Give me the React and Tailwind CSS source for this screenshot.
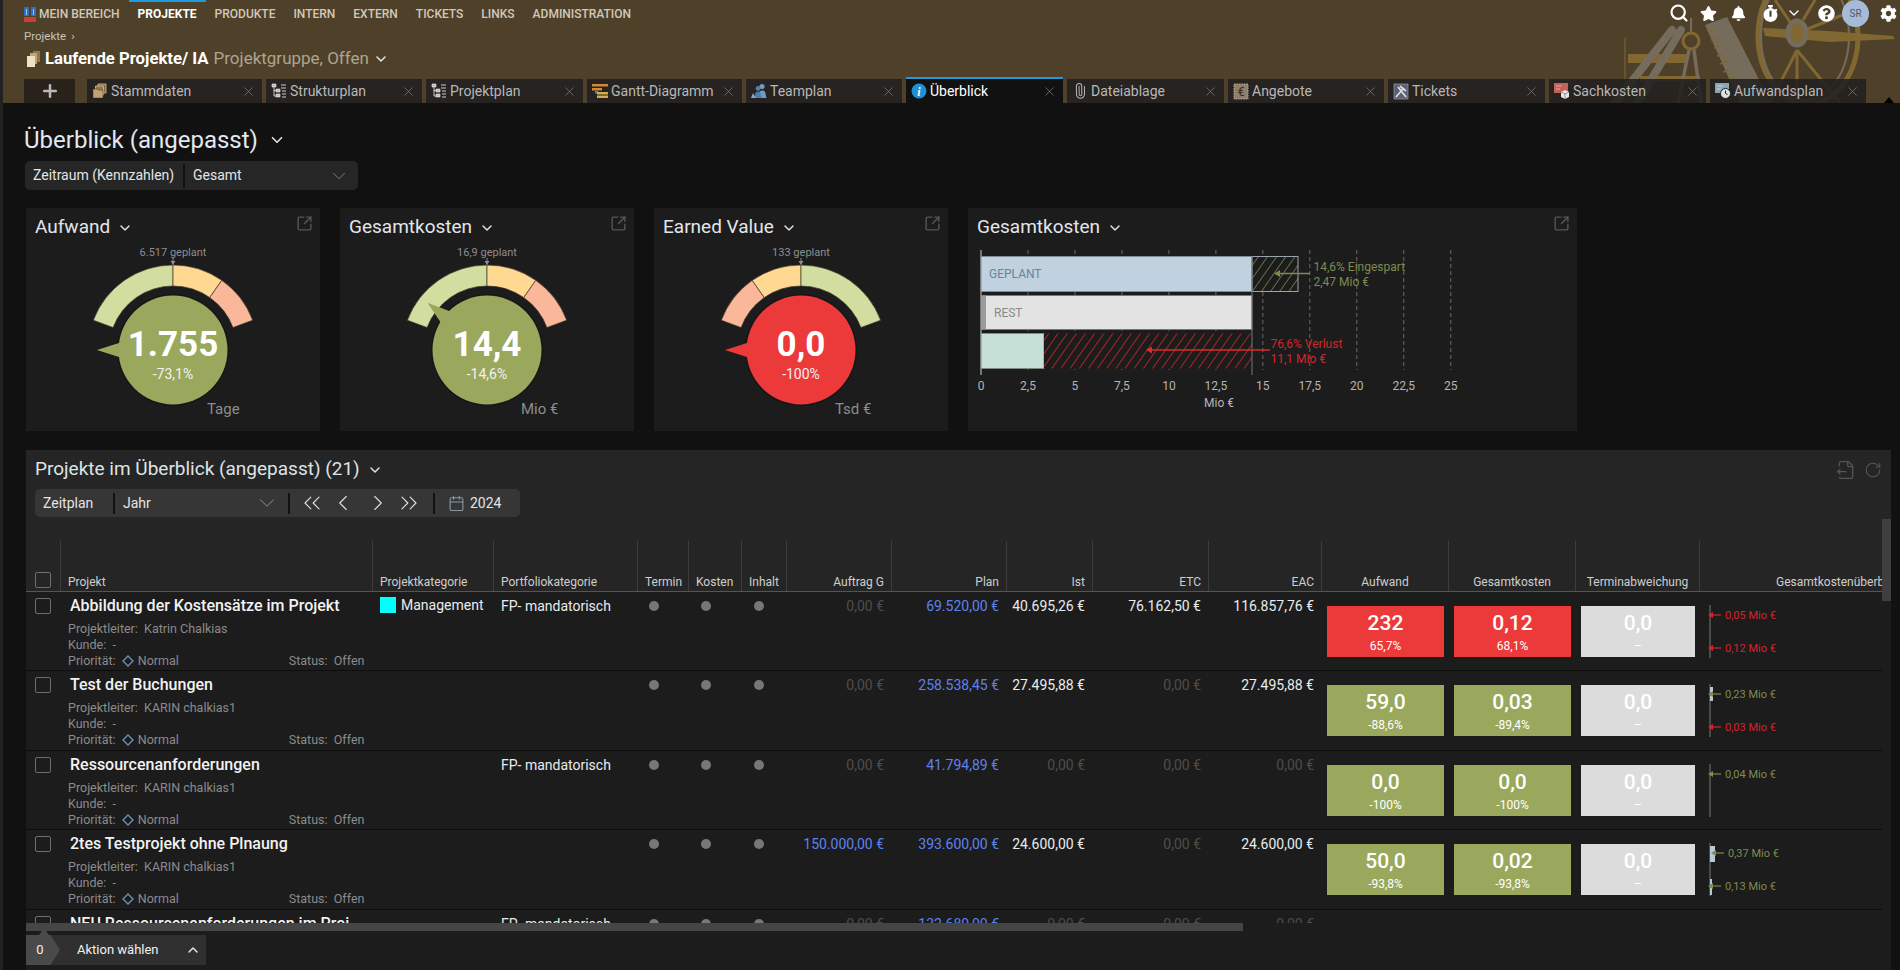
import React from 'react';
import { ChevronDown, ChevronUp, ChevronLeft, ChevronRight, ChevronsLeft, ChevronsRight, SquareArrowOutUpRight, X, Plus, Search, Calendar, Paperclip, RotateCw, FileOutput } from 'lucide-react';
import { FaStar, FaBell, FaStopwatch, FaQuestionCircle, FaCog } from 'react-icons/fa';

const polar = (cx, cy, r, a) => {
  const t = (a * Math.PI) / 180;
  return [cx + r * Math.sin(t), cy - r * Math.cos(t)];
};
const arcSeg = (cx, cy, a1, a2, r1 = 64, r2 = 85) => {
  const [x1, y1] = polar(cx, cy, r2, a1);
  const [x2, y2] = polar(cx, cy, r2, a2);
  const [x3, y3] = polar(cx, cy, r1, a2);
  const [x4, y4] = polar(cx, cy, r1, a1);
  return `M${x1} ${y1}A${r2} ${r2} 0 0 1 ${x2} ${y2}L${x3} ${y3}A${r1} ${r1} 0 0 0 ${x4} ${y4}Z`;
};

function TabIcon({ kind }) {
  if (kind === 'stamm') return (
    <svg width="16" height="16" viewBox="0 0 16 16"><path d="M6 1h8v9H6z" fill="#7d6a48" stroke="#d9c08c" strokeWidth=".8" /><path d="M3.5 3h8v9h-8z" fill="#8f7850" stroke="#d9c08c" strokeWidth=".8" /><path d="M1 6h4l1 1h5v8H1z" fill="#c2a56e" stroke="#3a2f1c" strokeWidth=".5" /></svg>
  );
  if (kind === 'tree') return (
    <svg width="16" height="16" viewBox="0 0 16 16" fill="none"><path d="M1 1h4v3H1zM5 6h4v3H5zM5 11h4v3H5z" fill="#bbb" stroke="#eee" strokeWidth=".6" /><path d="M3 4v9h2M3 7.5h2M10 2h5M10 5h5M11 8h4M11 11h4M11 14h4" stroke="#d0d0d0" strokeWidth="1" /></svg>
  );
  if (kind === 'gantt') return (
    <svg width="16" height="16" viewBox="0 0 16 16"><rect x="0" y="1" width="16" height="2.5" fill="#d08a35" /><rect x="0" y="5" width="10" height="2.5" fill="#d08a35" /><rect x="3" y="8" width="3" height="2.5" fill="#3a8fc0" /><rect x="5" y="9" width="11" height="2.5" fill="#d8b040" /><rect x="5" y="12.5" width="11" height="2.5" fill="#c8b060" /></svg>
  );
  if (kind === 'team') return (
    <svg width="16" height="16" viewBox="0 0 16 16" fill="#6d9cc4"><circle cx="11" cy="3.5" r="2.6" /><path d="M7.5 15l1-6c.4-2 5-2 5.600 0l1.400 6z" /><circle cx="7" cy="5.500" r="2.400" fill="#4f7fa8" /><path d="M3.500 15l1-5c.4-1.600 4.600-1.600 5 0l1 5z" fill="#4f7fa8" /><path d="M0 15l2-5 3 5z" fill="#7fa9cc" /></svg>
  );
  if (kind === 'info') return (
    <svg width="16" height="16" viewBox="0 0 16 16"><circle cx="8" cy="8" r="7.500" fill="#1f8fd8" /><text x="8" y="12.500" textAnchor="middle" fontSize="12" fontWeight="700" fontStyle="italic" fontFamily="Liberation Serif, serif" fill="#fff">i</text></svg>
  );
  if (kind === 'clip') return <Paperclip size={16} strokeWidth={1.5} color="#b8b8b8" className="-rotate-45" />;
  if (kind === 'euro') return (
    <svg width="16" height="17" viewBox="0 0 16 17"><rect x="1" y="1" width="14" height="15" fill="#8d7f6b" stroke="#b9a98e" strokeDasharray="1.500 1" /><text x="8" y="13" textAnchor="middle" fontSize="12" fill="#3b2e1c" fontFamily="Roboto, sans-serif">€</text></svg>
  );
  if (kind === 'ticket') return (
    <svg width="16" height="17" viewBox="0 0 16 17"><rect x="1" y="1" width="14" height="15" fill="#5a5f78" stroke="#aaa" strokeWidth=".6" /><path d="M3 14L10 6M7 3l6 5M5 4l8 10" stroke="#ddd" strokeWidth="1.800" /></svg>
  );
  if (kind === 'sach') return (
    <svg width="16" height="16" viewBox="0 0 16 16"><rect x="0" y="0" width="14" height="10" fill="#c2605a" /><path d="M2 3h6M2 6h4" stroke="#e6a8a0" /><path d="M7 9l4-2 4 2v5l-4 2-4-2z" fill="#e8e8e8" /><path d="M7 9l4 2 4-2M11 11v5" stroke="#555" strokeWidth=".6" fill="none" /></svg>
  );
  return (
    <svg width="16" height="16" viewBox="0 0 16 16"><rect x="0" y="0" width="14" height="10" fill="#88a6b8" /><path d="M2 3h6M2 6h4" stroke="#c4d6e0" /><circle cx="10.500" cy="10.500" r="5" fill="#e0e0e0" stroke="#222" /><path d="M10.500 7.500v3l2 1" stroke="#222" fill="none" /></svg>
  );
}

const tabs = [
  { w: 'w-[175px]', icon: 'stamm', label: 'Stammdaten' },
  { w: 'w-[156px]', icon: 'tree', label: 'Strukturplan' },
  { w: 'w-[157px]', icon: 'tree', label: 'Projektplan' },
  { w: 'w-[155px]', icon: 'gantt', label: 'Gantt-Diagramm' },
  { w: 'w-[156px]', icon: 'team', label: 'Teamplan' },
  { w: 'w-[157px]', icon: 'info', label: 'Überblick', active: true },
  { w: 'w-[157px]', icon: 'clip', label: 'Dateiablage' },
  { w: 'w-[156px]', icon: 'euro', label: 'Angebote' },
  { w: 'w-[157px]', icon: 'ticket', label: 'Tickets' },
  { w: 'w-[157px]', icon: 'sach', label: 'Sachkosten' },
  { w: 'w-[156px]', icon: 'auf', label: 'Aufwandsplan' },
];

function Illustration() {
  return (
    <svg className="absolute left-[-3px] top-0 opacity-85" width="1900" height="103" viewBox="0 0 1900 103" aria-hidden="true">
      <g fill="none">
        <path d="M1628 54h60v9h-60zM1640 76h60v5h-60z" fill="#8a6f34" />
        <path d="M1625 38v45" stroke="#8a6f34" />
        <path d="M1672 30L1615 103M1681 30L1637 103" stroke="#7d7464" strokeWidth="8" strokeLinecap="round" />
        <path d="M1705 25l22-8 44 86h-31z" fill="#7d7464" />
        <path d="M1708 32l8-3M1711 40l6-2M1714 48l8-3M1717 56l6-2M1720 64l8-3M1723 72l6-2M1727 80l8-3M1730 88l6-2M1734 96l8-3" stroke="#8a6f34" strokeWidth="1.500" />
        <circle cx="1691" cy="41" r="8" stroke="#8a6f34" strokeWidth="3" />
        <path d="M1689 50L1678 103M1694 50L1701 103" stroke="#7d7464" strokeWidth="3.500" />
        <path d="M1691 18v14" stroke="#7d7464" strokeWidth="2" />
        <ellipse cx="1808" cy="36" rx="50" ry="68" stroke="#8a6f34" strokeWidth="5" />
        <ellipse cx="1805" cy="36" rx="44" ry="64" stroke="#7d7464" strokeWidth="2" />
        <path d="M1797 50L1770 103M1797 50L1797 103M1797 50L1840 103M1790 22L1775 0M1803 20L1815 0M1805 30L1850 12" stroke="#8a6f34" strokeWidth="3" />
        <path d="M1763 28l65 3 65 5 2 3-65 3-65-6z" fill="#8a6f34" />
        <ellipse cx="1797" cy="33" rx="9" ry="12" stroke="#7d7464" strokeWidth="5" fill="#8a6f34" />
      </g>
    </svg>
  );
}

function Header() {
  const nav = ['PRODUKTE', 'INTERN', 'EXTERN', 'TICKETS', 'LINKS', 'ADMINISTRATION'];
  return (
    <header className="relative h-[103px] flex-none bg-[#4f4129] overflow-hidden">
      <Illustration />
      <div className="relative flex h-[28px] items-center pl-[21px] text-[12px] font-medium text-[#cfc9ba]">
        <svg width="12" height="15" viewBox="0 0 12 15" className="mr-[3px]"><path d="M0 0h5v9H0z" fill="#2f6fc0" /><path d="M7 0h5v9H7z" fill="#2f6fc0" /><path d="M0 10h12v5H0z" fill="#c8402f" /><path d="M2 2h1v6H2zM9 2h1v6H9z" fill="#9cc4ea" /></svg>
        <span>MEIN BEREICH</span>
        <span className="ml-[9px] flex h-[28px] items-center border-t-2 border-[#1e9ae0] px-[9px] pb-[2px] font-bold text-white">PROJEKTE</span>
        {nav.map((n) => <span key={n} className="ml-[9px] mr-[9px]">{n}</span>)}
      </div>
      <div className="relative flex items-center pl-[21px] text-[11.500px] leading-[14px] text-[#c9c3b5] mt-[1px]">Projekte<span className="ml-[5px]">›</span></div>
      <div className="relative mt-[6px] flex h-[20px] items-center pl-[24px] text-[16.700px]">
        <svg width="13" height="16" viewBox="0 0 13 16" className="mr-[5px]"><path d="M6 0h7v11H6z" fill="#8f7850" /><path d="M3 2h7v11H3z" fill="#c2a56e" /><path d="M0 5h8v11H0z" fill="#f0e2bf" /></svg>
        <span className="font-bold text-white">Laufende Projekte/ IA</span>
        <span className="ml-[5px] text-[17px] text-[#ada491]">Projektgruppe, Offen</span>
        <ChevronDown size={16} strokeWidth={2.200} className="ml-[4px] text-[#e8e8e8]" />
      </div>
      <div className="absolute left-[21px] top-[79px] flex h-[24px] items-stretch">
        <div className="mr-[12px] flex w-[51px] flex-none items-center justify-center bg-[#231f18]/90"><Plus size={20} strokeWidth={3} className="text-[#b9b9b9]" /></div>
        <div className="flex gap-[4px]">
          {tabs.map((t) => (
            <div key={t.label} className={t.active
              ? `${t.w} relative -mt-[2px] flex h-[26px] flex-none items-center border-t-2 border-[#1e9ae0] bg-[#111111] pl-[5px] pr-[6px] text-white`
              : `${t.w} flex flex-none items-center bg-[#1e1e1e]/85 pl-[5px] pr-[6px] text-[#b8b8b8]`}>
              <span className="flex w-[16px] flex-none items-center justify-center"><TabIcon kind={t.icon} /></span>
              <span className="ml-[3px] pt-[1px] text-[14px]">{t.label}</span>
              <X size={15} strokeWidth={1} className="ml-auto text-[#8b8b8b]" />
            </div>
          ))}
        </div>
      </div>
      <div className="absolute right-[1px] top-0 flex h-[26px] w-[232px] items-center text-white">
        <Search size={20} strokeWidth={2.600} className="ml-[2px] flex-none" />
        <FaStar size={17} className="ml-[11px] flex-none" />
        <FaBell size={15} className="ml-[14px] flex-none" />
        <FaStopwatch size={17} className="ml-[16px] flex-none" />
        <ChevronDown size={16} strokeWidth={2} className="ml-[7px] flex-none" />
        <FaQuestionCircle size={17} className="ml-[16px] flex-none" />
        <span className="ml-[7px] flex h-[27px] w-[27px] flex-none items-center justify-center rounded-full bg-[#a6bbd8] text-[10px] text-[#4c5a70]">SR</span>
        <FaCog size={17} className="ml-[11px] flex-none" />
      </div>
      <div className="absolute right-[6px] top-[97px] h-0 w-0 border-x-[5px] border-b-[6px] border-x-transparent border-b-black" />
    </header>
  );
}

function CardTitle({ children }) {
  return (
    <div className="flex h-[36px] items-center pl-[9px] pr-[7px] pt-[3px]">
      <span className="text-[19px] text-[#e2e6ea]">{children}</span>
      <ChevronDown size={16} strokeWidth={2.200} className="ml-[7px] mt-[1px] text-[#e0e0e0]" />
      <SquareArrowOutUpRight size={17} strokeWidth={2} className="ml-auto -mt-[8px] text-[#555555]" />
    </div>
  );
}

function Gauge({ title, value, pct, unit, planned, pointer, red, mirror }) {
  const cx = 147, cy = 106;
  const segs = mirror
    ? [[-69.500, -35, '#fbb79a'], [-35, 0, '#ffd991'], [0, 69.500, '#d2dea0']]
    : [[-69.500, 0, '#d2dea0'], [0, 35, '#ffd991'], [35, 69.500, '#fbb79a']];
  const fill = red ? '#ec3a3a' : '#99a85c';
  const [tx, ty] = polar(cx, cy, 76, pointer);
  const [b1x, b1y] = polar(cx, cy, 53, pointer - 8);
  const [b2x, b2y] = polar(cx, cy, 53, pointer + 8);
  return (
    <div className="h-[223px] w-[294px] flex-none bg-[#1c1c1c]">
      <CardTitle>{title}</CardTitle>
      <svg width="294" height="187" viewBox="0 0 294 187" className="block">
        <text x={cx} y="12" textAnchor="middle" fontSize="11" fill="#8d8d8d">{planned}</text>
        <path d={`M${cx} 14v7`} stroke="#8d8d8d" />
        <path d={`M${cx - 2.500} 17h5l-2.500 4z`} fill="#8d8d8d" />
        {segs.map((s) => <path key={s[2]} d={arcSeg(cx, cy, s[0], s[1])} fill={s[2]} stroke="#3c3a2c" strokeWidth=".7" />)}
        <circle cx={cx} cy={cy} r="56" fill="#161616" />
        <path d={`M${tx} ${ty}L${b1x} ${b1y}L${b2x} ${b2y}Z`} fill={fill} />
        <circle cx={cx} cy={cy} r="54.500" fill={fill} />
        <text x={cx} y="112" textAnchor="middle" fontSize="35" fontWeight="700" fill="#fff">{value}</text>
        <text x={cx} y="135" textAnchor="middle" fontSize="14" fill="#f2f2f2">{pct}</text>
        <text x="181" y="170" fontSize="15" fill="#8d8d8d">{unit}</text>
      </svg>
    </div>
  );
}

function Bullet() {
  const x0 = 981, u = 18.790;
  const ticks = [0, 2.500, 5, 7.500, 10, 12.500, 15, 17.500, 20, 22.500, 25];
  return (
    <div className="h-[223px] w-[609px] flex-none bg-[#1c1c1c]">
      <CardTitle>Gesamtkosten</CardTitle>
      <svg width="609" height="187" viewBox="968 244 609 187" className="block">
        <defs>
          <pattern id="hg" width="7.500" height="7.500" patternUnits="userSpaceOnUse" patternTransform="rotate(35)"><path d="M0 0v7.500" stroke="#8b9a55" strokeWidth="1.300" /></pattern>
          <pattern id="hr" width="7.500" height="7.500" patternUnits="userSpaceOnUse" patternTransform="rotate(35)"><path d="M0 0v7.500" stroke="#e02a2a" strokeWidth="1.400" /></pattern>
        </defs>
        {ticks.slice(1).map((t) => <path key={t} d={`M${x0 + t * u} 250v120`} stroke="#6a6a6a" strokeDasharray="4 3" />)}
        <path d={`M${x0} 250v125`} stroke="#cfcfcf" />
        <rect x={x0} y="256.500" width="271" height="35" fill="#c0d2e0" stroke="#7f8a94" />
        <rect x="1252" y="256.500" width="46" height="35" fill="#1c1c1c" />
        <rect x="1252" y="256.500" width="46" height="35" fill="url(#hg)" stroke="#9aa4ac" />
        <rect x={x0} y="295.500" width="271" height="34" fill="#e3e3e3" stroke="#777" />
        <rect x={x0} y="295.500" width="5" height="34" fill="#9a9a9a" />
        <rect x={x0} y="333.500" width="63" height="35" fill="#c6e0d8" stroke="#7f8a84" />
        <rect x="1044" y="333.500" width="208" height="35" fill="#1c1c1c" />
        <rect x="1044" y="333.500" width="208" height="35" fill="url(#hr)" />
        <path d="M1252 256v119" stroke="#777" />
        <path d="M1310 273.500h-34" stroke="#7f8a50" strokeWidth="1.500" />
        <path d="M1274 273.500l6-3.500v7z" fill="#7f8a50" />
        <path d="M1270 350h-122" stroke="#e02a2a" strokeWidth="1.500" />
        <path d="M1146 350l6-3.500v7z" fill="#e02a2a" />
        <text x="989" y="278" fontSize="12" fill="#6c8299">GEPLANT</text>
        <text x="994" y="317" fontSize="12" fill="#8a8a8a">REST</text>
        <text x="1313.500" y="271" fontSize="12" fill="#7f8a50">14,6% Eingespart</text>
        <text x="1313.500" y="286" fontSize="12" fill="#7f8a50">2,47 Mio €</text>
        <text x="1270.500" y="348" fontSize="12" fill="#d8232a">76,6% Verlust</text>
        <text x="1270.500" y="363" fontSize="12" fill="#d8232a">11,1 Mio €</text>
        {ticks.map((t) => <text key={t} x={x0 + t * u} y="390" textAnchor="middle" fontSize="12" fill="#b5b5b5">{String(t).replace('.', ',')}</text>)}
        <text x="1219" y="407" textAnchor="middle" fontSize="12" fill="#b5b5b5">Mio €</text>
      </svg>
    </div>
  );
}

const colGrid = 'grid grid-cols-[34px_312px_121px_144px_51px_53px_45px_105px_115px_86px_116px_113px_127px_127px_124px_300px]';
const headers = [
  ['Projekt', 'l'], ['Projektkategorie', 'l'], ['Portfoliokategorie', 'l'], ['Termin', 'l'], ['Kosten', 'l'], ['Inhalt', 'l'],
  ['Auftrag G', 'r'], ['Plan', 'r'], ['Ist', 'r'], ['ETC', 'r'], ['EAC', 'r'], ['Aufwand', 'c'], ['Gesamtkosten', 'c'], ['Terminabweichung', 'c'], ['Gesamtkostenüberblick', 'x'],
];

function Tile({ v, s, tone, w }) {
  const bg = tone === 'red' ? 'bg-[#ec3a3a]' : tone === 'green' ? 'bg-[#99a85c]' : 'bg-[#dcdcdc]';
  return (
    <div className="pt-[14px] pl-[6px]">
      <div className={`${bg} ${w || 'w-[117px]'} flex h-[51px] flex-col items-center text-white`}>
        <span className="mt-[3px] text-[21px] font-medium leading-[28px]">{v}</span>
        <span className="mt-[2px] text-[12px] leading-[14px]">{s}</span>
      </div>
    </div>
  );
}

function Mini({ items, bars }) {
  return (
    <div className="pt-[13px]">
      <svg width="170" height="55" viewBox="0 0 170 55" className="block">
        <path d="M11 0v53" stroke="#777" />
        {bars && bars.map((b) => <rect key={b[0]} x="11" y={b[0]} width={b[1]} height={b[2]} fill="#b9c8d4" />)}
        {items.map((it) => {
          const c = it.red ? '#d8232a' : '#7f8a50';
          return (
            <g key={it.y}>
              <path d={`M${it.x - 4} ${it.y}H${it.x - 14}`} stroke={c} strokeWidth="1.200" />
              <path d={`M${it.x - 17} ${it.y}l5-3v6z`} fill={c} />
              <text x={it.x} y={it.y + 4} fontSize="11" fill={c}>{it.t}</text>
            </g>
          );
        })}
      </svg>
    </div>
  );
}

function Money({ v, blue }) {
  const zero = v === '0,00 €';
  const color = zero ? 'text-[#4d4d4d]' : blue ? 'text-[#5d82ef]' : 'text-[#e8ecef]';
  return <div className={`${color} pr-[7px] pt-[4px] text-right text-[14px] leading-[20px]`}>{v}</div>;
}

function Row({ d }) {
  return (
    <div className={`${colGrid} h-[79.500px] border-b border-[#0d0d0d] bg-[#1c1c1c]`}>
      <div className="pl-[9px] pt-[6px]"><div className="h-[16px] w-[16px] rounded-[2px] border border-[#6e6e6e]" /></div>
      <div className="pl-[8px] pt-[4px] text-[12.500px] leading-[16px] text-[#8b8b8b]">
        <div className="mb-[5px] pl-[2px] text-[16px] font-medium leading-[20px] text-[#f2f2f2] whitespace-nowrap">{d.name}</div>
        <div className="whitespace-pre">Projektleiter:  {d.lead}</div>
        <div className="whitespace-pre">Kunde:  -</div>
        <div className="flex items-center whitespace-pre">
          <span>Priorität:  </span>
          <svg width="12" height="12" viewBox="0 0 12 12" className="mr-[4px]"><path d="M6 1l5 5-5 5-5-5z" fill="none" stroke="#6d94b8" strokeWidth="1.300" /></svg>
          <span className="w-[151px]">Normal</span>
          <span>Status:  Offen</span>
        </div>
      </div>
      <div className="flex items-start pl-[8px] pt-[5px] text-[14px] leading-[16px] text-[#e8ecef]">
        {d.cat && <><span className="mr-[5px] h-[16px] w-[16px] bg-[#00ffff]" /><span>{d.cat}</span></>}
      </div>
      <div className="pl-[8px] pt-[4px] text-[14px] leading-[20px] text-[#e8ecef] whitespace-nowrap">{d.port}</div>
      <div className="flex pl-[12px] pt-[9px]"><span className="h-[10px] w-[10px] rounded-full bg-[#777777]" /></div>
      <div className="flex pl-[13px] pt-[9px]"><span className="h-[10px] w-[10px] rounded-full bg-[#777777]" /></div>
      <div className="flex pl-[13px] pt-[9px]"><span className="h-[10px] w-[10px] rounded-full bg-[#777777]" /></div>
      <Money v={d.m[0]} blue />
      <Money v={d.m[1]} blue />
      <Money v={d.m[2]} />
      <Money v={d.m[3]} />
      <Money v={d.m[4]} />
      <Tile v={d.a[0]} s={d.a[1]} tone={d.a[2]} />
      <Tile v={d.g[0]} s={d.g[1]} tone={d.g[2]} />
      <Tile v="0,0" s="–" tone="gray" w="w-[114px]" />
      <Mini items={d.mini} bars={d.bars} />
    </div>
  );
}

const rows = [
  { name: 'Abbildung der Kostensätze im Projekt', lead: 'Katrin Chalkias', cat: 'Management', port: 'FP- mandatorisch', m: ['0,00 €', '69.520,00 €', '40.695,26 €', '76.162,50 €', '116.857,76 €'], a: ['232', '65,7%', 'red'], g: ['0,12', '68,1%', 'red'], mini: [{ y: 10, x: 26, t: '0,05 Mio €', red: true }, { y: 43, x: 26, t: '0,12 Mio €', red: true }] },
  { name: 'Test der Buchungen', lead: 'KARIN chalkias1', port: '', m: ['0,00 €', '258.538,45 €', '27.495,88 €', '0,00 €', '27.495,88 €'], a: ['59,0', '-88,6%', 'green'], g: ['0,03', '-89,4%', 'green'], mini: [{ y: 10, x: 26, t: '0,23 Mio €' }, { y: 43, x: 26, t: '0,03 Mio €', red: true }], bars: [[3, 3, 14]] },
  { name: 'Ressourcenanforderungen', lead: 'KARIN chalkias1', port: 'FP- mandatorisch', m: ['0,00 €', '41.794,89 €', '0,00 €', '0,00 €', '0,00 €'], a: ['0,0', '-100%', 'green'], g: ['0,0', '-100%', 'green'], mini: [{ y: 10, x: 26, t: '0,04 Mio €' }] },
  { name: '2tes Testprojekt ohne Plnaung', lead: 'KARIN chalkias1', port: '', m: ['150.000,00 €', '393.600,00 €', '24.600,00 €', '0,00 €', '24.600,00 €'], a: ['50,0', '-93,8%', 'green'], g: ['0,02', '-93,8%', 'green'], mini: [{ y: 10, x: 29, t: '0,37 Mio €' }, { y: 43, x: 26, t: '0,13 Mio €' }], bars: [[3, 5, 16], [36, 2, 16]] },
  { name: 'NEU Ressourcenanforderungen im Proj', lead: 'KARIN chalkias1', port: 'FP- mandatorisch', m: ['0,00 €', '132.680,00 €', '0,00 €', '0,00 €', '0,00 €'], a: ['', '', 'none'], g: ['', '', 'none'], mini: [] },
];

function ToolSep({ className }) {
  return <span className={`${className} block h-[21px] w-[2px] flex-none bg-[#111111]`} />;
}

function Panel() {
  return (
    <section className="relative mt-[19px] flex-1 bg-[#1c1c1c] w-[1865px]">
      <div className="h-[141px] bg-[#252525] pl-[9px] pr-[9px]">
        <div className="flex h-[39px] items-center">
          <span className="text-[19px] text-[#dfe3e6]">Projekte im Überblick (angepasst) (21)</span>
          <ChevronDown size={16} strokeWidth={2.200} className="ml-[7px] text-[#e0e0e0]" />
          <FileOutput size={20} strokeWidth={1.500} className="ml-auto text-[#555555]" />
          <RotateCw size={18} strokeWidth={1.500} className="ml-[8px] text-[#555555]" />
        </div>
        <div className="flex h-[28px] w-[485px] items-center rounded-[5px] bg-[#363636] text-[14px] text-[#e4e4e4]">
          <span className="ml-[8px] w-[70px]">Zeitplan</span>
          <ToolSep />
          <span className="ml-[8px] w-[131px]">Jahr</span>
          <ChevronDown size={26} strokeWidth={0.8} className="flex-none text-[#999999]" />
          <ToolSep className="ml-[8px]" />
          <ChevronsLeft size={28} strokeWidth={1} className="ml-[8px] flex-none text-[#dddddd]" />
          <ChevronLeft size={26} strokeWidth={1} className="ml-[4px] flex-none text-[#dddddd]" />
          <ChevronRight size={26} strokeWidth={1} className="ml-[9px] flex-none text-[#dddddd]" />
          <ChevronsRight size={28} strokeWidth={1} className="ml-[4px] flex-none text-[#dddddd]" />
          <ToolSep className="ml-[10px]" />
          <Calendar size={17} strokeWidth={1.500} className="ml-[13px] flex-none text-[#8c9aa8]" />
          <span className="ml-[5px]">2024</span>
        </div>
      </div>
      <div className="absolute left-0 top-[91px] h-[382px] w-[1856px] overflow-hidden">
        <div className={`${colGrid} h-[50.500px] w-[2300px] border-b border-[#555555] bg-[#252525] text-[12px] text-[#cfcfcf]`}>
          <div className="flex items-end pb-[3px] pl-[9px]"><div className="h-[16px] w-[16px] rounded-[2px] border border-[#6e6e6e]" /></div>
          {headers.map(([h, a]) => (
            <div key={h} className={a === 'r'
              ? 'flex items-end justify-end border-l border-[#3d3d3d] pr-[7px]'
              : a === 'c'
                ? 'flex items-end justify-center border-l border-[#3d3d3d]'
                : a === 'x'
                  ? 'flex items-end whitespace-nowrap border-l border-[#3d3d3d] pl-[76px]'
                  : 'flex items-end border-l border-[#3d3d3d] pl-[7px]'}>
              {h}
            </div>
          ))}
        </div>
        {rows.map((r) => <div key={r.name} className="w-[2300px]"><Row d={r} /></div>)}
      </div>
      <div className="absolute right-0 top-[69px] h-[82px] w-[9px] bg-[#3f3f3f]" />
      <div className="absolute left-0 top-[473px] h-[8px] w-[1217px] bg-[#454545]" />
      <div className="absolute left-[13px] top-[478px] h-0 w-0 border-x-[5px] border-b-[7px] border-x-transparent border-b-[#4a4a4a]" />
      <div className="absolute left-0 top-[485px] flex h-[30px] w-[180px] items-center bg-[#303030] text-[13px] text-[#f0f0f0]">
        <span className="flex h-[30px] w-[34px] flex-none items-center justify-center bg-[#4a4a4a] [clip-path:polygon(0_0,72%_0,100%_50%,72%_100%,0_100%)] pr-[6px]">0</span>
        <span className="ml-[17px] whitespace-nowrap">Aktion wählen</span>
        <ChevronUp size={16} strokeWidth={2} className="ml-[26px] flex-none" />
      </div>
    </section>
  );
}

export default function App() {
  return (
    <div className="flex h-[970px] w-[1900px] flex-col overflow-hidden border-l-[3px] border-[#222222] bg-[#111111] font-['Roboto',sans-serif]">
      <Header />
      <main className="flex flex-1 flex-col pl-[23px]">
        <div className="-ml-[2px] mt-[21px] flex h-[32px] items-center">
          <span className="text-[24px] leading-[32px] text-[#e2e8ee]">Überblick (angepasst)</span>
          <ChevronDown size={18} strokeWidth={2.200} className="ml-[10px] text-[#e0e0e0]" />
        </div>
        <div className="-ml-[1px] mt-[5px] flex h-[29px] w-[333px] items-center rounded-[5px] bg-[#262626] text-[14px] text-[#e4e4e4]">
          <span className="ml-[8px] w-[150px] whitespace-nowrap">Zeitraum (Kennzahlen)</span>
          <span className="h-[24px] w-[2px] bg-[#111111]" />
          <span className="ml-[8px]">Gesamt</span>
          <ChevronDown size={22} strokeWidth={0.8} className="ml-auto mr-[8px] text-[#999999]" />
        </div>
        <div className="mt-[18px] flex gap-[20px]">
          <Gauge title="Aufwand" value="1.755" pct="-73,1%" unit="Tage" planned="6.517 geplant" pointer={-90} />
          <Gauge title="Gesamtkosten" value="14,4" pct="-14,6%" unit="Mio €" planned="16,9 geplant" pointer={-51.600} />
          <Gauge title="Earned Value" value="0,0" pct="-100%" unit="Tsd €" planned="133 geplant" pointer={-90} red mirror />
          <Bullet />
        </div>
        <Panel />
      </main>
    </div>
  );
}
